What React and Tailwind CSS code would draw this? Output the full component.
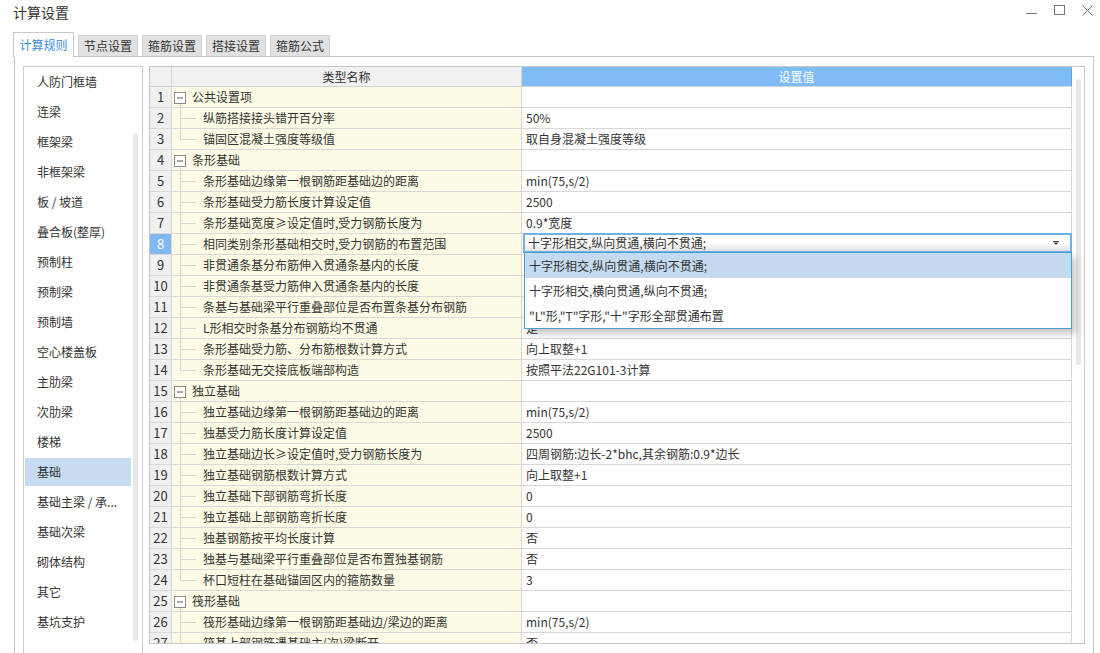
const menu = [
  '人防门框墙',
  '连梁',
  '框架梁',
  '非框架梁',
  '板 / 坡道',
  '叠合板(整厚)',
  '预制柱',
  '预制梁',
  '预制墙',
  '空心楼盖板',
  '主肋梁',
  '次肋梁',
  '楼梯',
  '基础',
  '基础主梁 / 承...',
  '基础次梁',
  '砌体结构',
  '其它',
  '基坑支护',
]

const tabs = ['计算规则', '节点设置', '箍筋设置', '搭接设置', '箍筋公式']

// t: g = group, c = child, l = last child
const rows = [
  { n: 1, t: 'g', name: '公共设置项', v: '' },
  { n: 2, t: 'c', name: '纵筋搭接接头错开百分率', v: '50%' },
  { n: 3, t: 'l', name: '锚固区混凝土强度等级值', v: '取自身混凝土强度等级' },
  { n: 4, t: 'g', name: '条形基础', v: '' },
  { n: 5, t: 'c', name: '条形基础边缘第一根钢筋距基础边的距离', v: 'min(75,s/2)' },
  { n: 6, t: 'c', name: '条形基础受力筋长度计算设定值', v: '2500' },
  { n: 7, t: 'c', name: '条形基础宽度≥设定值时,受力钢筋长度为', v: '0.9*宽度' },
  { n: 8, t: 'c', name: '相同类别条形基础相交时,受力钢筋的布置范围', v: '', open: true },
  { n: 9, t: 'c', name: '非贯通条基分布筋伸入贯通条基内的长度', v: '' },
  { n: 10, t: 'c', name: '非贯通条基受力筋伸入贯通条基内的长度', v: '' },
  { n: 11, t: 'c', name: '条基与基础梁平行重叠部位是否布置条基分布钢筋', v: '' },
  { n: 12, t: 'c', name: 'L形相交时条基分布钢筋均不贯通', v: '是' },
  { n: 13, t: 'c', name: '条形基础受力筋、分布筋根数计算方式', v: '向上取整+1' },
  { n: 14, t: 'l', name: '条形基础无交接底板端部构造', v: '按照平法22G101-3计算' },
  { n: 15, t: 'g', name: '独立基础', v: '' },
  { n: 16, t: 'c', name: '独立基础边缘第一根钢筋距基础边的距离', v: 'min(75,s/2)' },
  { n: 17, t: 'c', name: '独基受力筋长度计算设定值', v: '2500' },
  { n: 18, t: 'c', name: '独立基础边长≥设定值时,受力钢筋长度为', v: '四周钢筋:边长-2*bhc,其余钢筋:0.9*边长' },
  { n: 19, t: 'c', name: '独立基础钢筋根数计算方式', v: '向上取整+1' },
  { n: 20, t: 'c', name: '独立基础下部钢筋弯折长度', v: '0' },
  { n: 21, t: 'c', name: '独立基础上部钢筋弯折长度', v: '0' },
  { n: 22, t: 'c', name: '独基钢筋按平均长度计算', v: '否' },
  { n: 23, t: 'c', name: '独基与基础梁平行重叠部位是否布置独基钢筋', v: '否' },
  { n: 24, t: 'l', name: '杯口短柱在基础锚固区内的箍筋数量', v: '3' },
  { n: 25, t: 'g', name: '筏形基础', v: '' },
  { n: 26, t: 'c', name: '筏形基础边缘第一根钢筋距基础边/梁边的距离', v: 'min(75,s/2)' },
  { n: 27, t: 'c', name: '筏基上部钢筋遇基础主(次)梁断开', v: '否' },
]

const options = ['十字形相交,纵向贯通,横向不贯通;', '十字形相交,横向贯通,纵向不贯通;', '"L"形,"T"字形,"十"字形全部贯通布置']

function TreeMark({ t }) {
  if (t === 'g') {
    return (
      <svg width="16" height="20" className="shrink-0">
        <rect x="2.5" y="5.5" width="11" height="11" fill="white" stroke="#8c8c8c" />
        <line x1="5" y1="11" x2="11" y2="11" stroke="#555" />
        <line x1="8.5" y1="17" x2="8.5" y2="20" stroke="#d6d6d6" />
      </svg>
    )
  }
  return (
    <svg width="24" height="20" className="shrink-0">
      <line x1="8.5" y1="0" x2="8.5" y2={t === 'l' ? 10.5 : 20} stroke="#d6d6d6" />
      <line x1="8.5" y1="10.5" x2="24" y2="10.5" stroke="#d6d6d6" />
    </svg>
  )
}

function Dropdown() {
  return (
    <>
      <div className="absolute -top-px left-px -right-px h-[20px] border-2 border-[#72b0ea] bg-gradient-to-b from-white via-white to-[#e2e2e2] flex items-center pl-[3px] pr-[11px] z-10">
        <span className="flex-1">{options[0]}</span>
        <svg width="6" height="4" viewBox="0 0 6 4">
          <rect x="0" y="0" width="6" height="1" fill="#444" />
          <path d="M0.5 1.5h5L3 4z" fill="#444" />
        </svg>
      </div>
      <div className="absolute top-[18px] left-[2px] -right-px border border-[#46a2c9] bg-white z-20 shadow-[4px_5px_7px_rgba(0,0,0,0.22)]">
        {options.map((o, i) => (
          <div
            key={o}
            className={`h-[25px] leading-[25px] pl-[4px] ${i === 0 ? 'bg-[#c3daf0]' : ''}`}
          >
            {o}
          </div>
        ))}
      </div>
    </>
  )
}

export default function App() {
  return (
    <div className="w-[1100px] h-[653px] overflow-hidden bg-white text-[#333] font-['Noto_Sans_CJK_SC','Noto_Sans',sans-serif] flex flex-col">
      {/* title bar */}
      <div className="h-[32px] shrink-0 flex items-start justify-between">
        <div className="pl-[13px] pt-[2px] text-[14px] leading-[20px]">计算设置</div>
        <div className="flex items-start gap-[17px] pt-[5px] pr-[7px]">
          <div className="w-[11px] h-[9px] border-b border-[#777]" />
          <div className="w-[11px] h-[10px] border border-[#777]" />
          <svg width="11" height="11" viewBox="0 0 11 11">
            <path d="M0.5 0.5L10.5 10.5M10.5 0.5L0.5 10.5" stroke="#777" />
          </svg>
        </div>
      </div>

      {/* tabs */}
      <div className="h-[24px] shrink-0 flex items-end gap-[4px] pl-[13px] relative z-10">
        {tabs.map((t, i) =>
          i === 0 ? (
            <div
              key={t}
              className="w-[61px] h-[25px] -mb-px bg-white border border-b-0 border-[#c8c8c8] text-[#3b8ad6] text-[12px] flex items-center justify-center pb-[1px]"
            >
              {t}
            </div>
          ) : (
            <div
              key={t}
              className="w-[60px] h-[21px] bg-[#e1e1e1] border border-b-0 border-[#d2d2d2] text-[12px] flex items-center justify-center"
            >
              {t}
            </div>
          )
        )}
      </div>

      {/* panel */}
      <div className="ml-[14px] mr-[6px] h-[640px] shrink-0 border border-[#c8c8c8] pt-[9px] pl-[8px] pr-[8px] flex gap-[6px] text-[12px]">
        {/* side list */}
        <div className="w-[120px] h-[640px] border border-[#cccccc] flex">
          <div className="w-[106px] ml-px">
            {menu.map((m) => (
              <div key={m} className="h-[30px] py-px">
                <div
                  className={`h-[28px] leading-[28px] pl-[12px] whitespace-nowrap ${m === '基础' ? 'bg-[#c5dbf0]' : ''}`}
                >
                  {m}
                </div>
              </div>
            ))}
          </div>
          <div className="ml-[2px] w-[5px] pt-[66px]">
            <div className="h-[508px] w-[5px] rounded-full bg-[#e8e8e8]" />
          </div>
        </div>

        {/* grid */}
        <div className="w-[936px] h-[578px] border border-[#c8c8c8] flex overflow-hidden">
          <div className="w-[922px]">
            <div className="flex h-[20px] border-b border-[#d4d4d4]">
              <div className="w-[22px] bg-[#f1f1f1] border-r border-[#d4d4d4]" />
              <div className="w-[350px] bg-[#f1f1f1] border-r border-[#d4d4d4] text-center leading-[19px]">类型名称</div>
              <div className="w-[550px] bg-[#7fbcf6] border-r border-[#5ca4ec] text-white text-center leading-[19px]">设置值</div>
            </div>
            {rows.map((r) => (
              <div key={r.n} className="flex h-[21px] border-b border-[#d8d8d8]">
                <div
                  className={`w-[22px] border-r border-[#d8d8d8] text-center leading-[20px] text-[13px] ${r.n === 8 ? 'bg-[#80b8f2] text-white' : 'bg-[#f0f0f0]'}`}
                >
                  {r.n}
                </div>
                <div className="w-[350px] border-r border-[#d8d8d8] bg-[#fdfbe6] flex items-center whitespace-nowrap overflow-hidden">
                  <TreeMark t={r.t} />
                  <span className={r.t === 'g' ? 'ml-[4px]' : 'ml-[7px]'}>{r.name}</span>
                </div>
                <div className="w-[550px] border-r border-[#d8d8d8] pl-[4px] leading-[20px] whitespace-nowrap relative">
                  {r.open ? <Dropdown /> : r.v}
                </div>
              </div>
            ))}
          </div>
          <div className="w-[12px] pt-[12px] pl-[4px]">
            <div className="w-[5px] h-[286px] rounded-full bg-[#e8e8e8]" />
          </div>
        </div>
      </div>
    </div>
  )
}
